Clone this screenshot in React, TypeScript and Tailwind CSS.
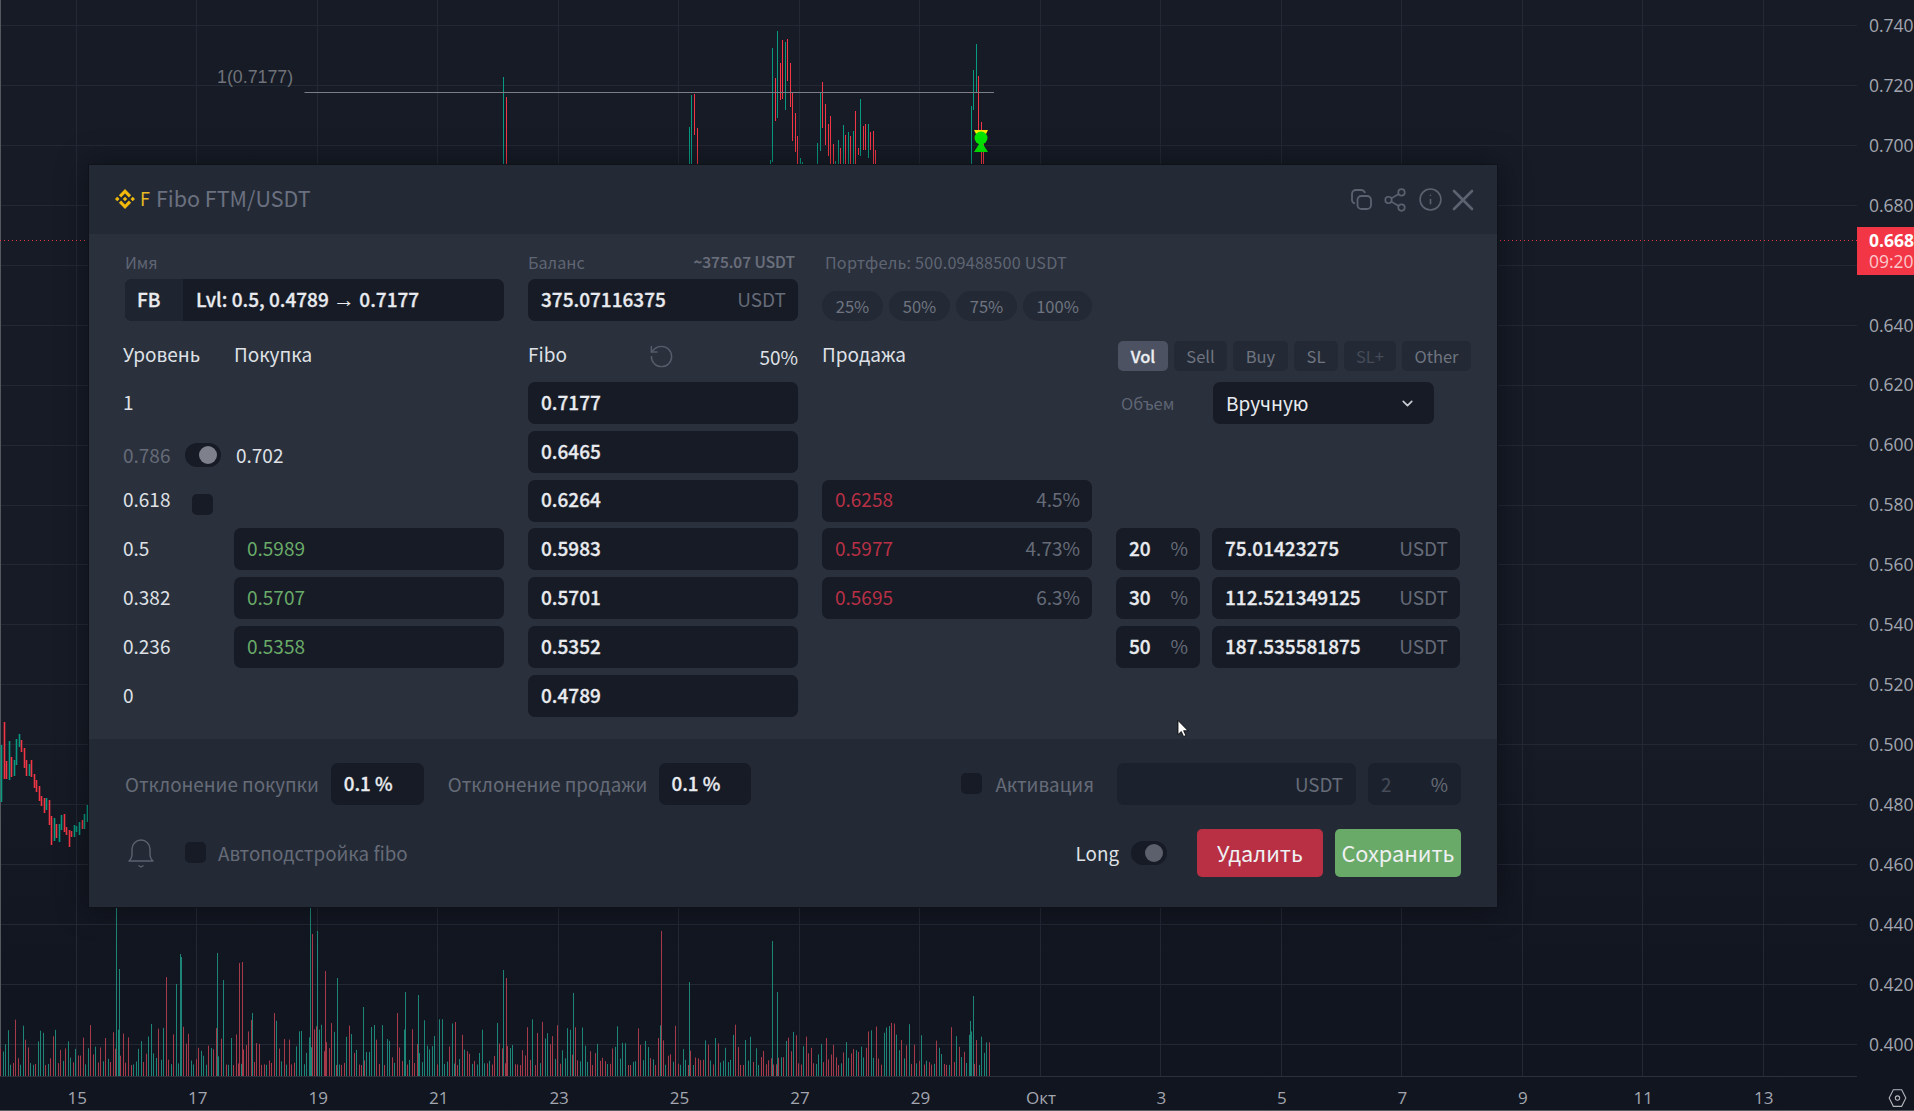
import { ReactNode } from 'react';
import { ChevronDown, Info, RotateCcw, Share2, X } from 'lucide-react';

const RED = '#f23645';
const GREEN = '#089981';

// x, top, bottom, 1 = green
const LEFT_CANDLES: number[][] = [
  [1.5, 745, 802, 1], [4.5, 722, 779, 0], [6.5, 761, 779, 0], [9.5, 741, 780, 1], [11.5, 757, 777, 0],
  [14.5, 760, 776, 1], [16.5, 739, 765, 1], [19.5, 734, 747, 1], [21.5, 740, 752, 0], [24.5, 748, 768, 0],
  [26.5, 760, 776, 0], [29.5, 764, 776, 1], [31.5, 760, 777, 0], [34.5, 774, 788, 0], [36.5, 780, 792, 0],
  [39.5, 786, 801, 0], [41.5, 796, 806, 0], [44.5, 798, 813, 0], [46.5, 798, 810, 1], [49.5, 800, 825, 0],
  [51.5, 816, 845, 0], [54.5, 818, 841, 1], [56.5, 824, 838, 0], [59.5, 824, 842, 1], [61.5, 815, 830, 1],
  [64.5, 814, 832, 0], [66.5, 827, 835, 0], [69.5, 830, 847, 0], [71.5, 831, 837, 0], [74.5, 825, 837, 1],
  [76.5, 826, 832, 1], [79.5, 822, 835, 1], [82.5, 820, 829, 0], [84.5, 814, 829, 1], [87.5, 805, 822, 1],
];

const TOP_WICKS: number[][] = [
  [503, 77, 165, 1], [506, 97, 165, 0], [689, 127, 165, 1], [691, 95, 165, 1], [694, 94, 135, 0], [697, 128, 165, 0],
  [770, 160, 165, 1], [772, 48, 162, 1], [775, 78, 121, 0], [777, 31, 118, 1], [780, 63, 100, 0], [782, 40, 99, 0],
  [785, 42, 110, 1], [787, 39, 81, 0], [790, 63, 107, 0], [792, 93, 141, 0], [795, 113, 152, 0], [797, 136, 165, 0],
  [800, 158, 165, 1], [802, 162, 165, 1], [817, 143, 165, 1], [820, 93, 151, 1], [822, 82, 128, 0], [825, 104, 145, 0],
  [828, 124, 156, 0], [830, 116, 165, 0], [833, 144, 165, 0], [835, 161, 165, 1], [838, 140, 165, 1], [840, 148, 165, 0],
  [843, 125, 165, 1], [845, 135, 165, 0], [848, 132, 165, 1], [850, 136, 165, 0], [853, 131, 165, 1], [855, 111, 165, 0],
  [858, 148, 155, 0], [860, 99, 156, 1], [863, 126, 150, 0], [865, 124, 150, 0], [868, 124, 158, 1], [870, 132, 150, 0],
  [873, 131, 165, 0], [875, 150, 165, 0], [971, 106, 165, 1], [973, 70, 110, 1], [976, 44, 93, 1], [978, 76, 130, 0],
  [981, 122, 165, 0], [983, 140, 165, 0],
];

// tall volume bars, the rest is filler
const VOLUME_SPIKES: number[][] = [
  [116, 908, 1], [119, 969, 1], [166, 977, 0], [176, 984, 1], [180, 954, 1], [181, 957, 1], [217, 953, 1], [223, 980, 1],
  [239, 963, 0], [242, 962, 0], [252, 1013, 1], [274, 1013, 0], [310, 908, 1], [312, 934, 0], [317, 931, 1], [325, 971, 0],
  [337, 978, 1], [363, 1007, 1], [397, 1013, 0], [405, 992, 1], [418, 995, 1], [455, 1022, 0], [503, 970, 1], [506, 978, 0],
  [573, 993, 1], [661, 931, 0], [689, 982, 1], [772, 941, 1], [777, 992, 1], [970, 1021, 1], [973, 996, 1],
];

function volumeBars() {
  const bars: number[][] = [];
  let seed = 7;
  for (let i = 0; i < 395; i++) {
    seed = (seed * 1103515245 + 12345) % 2147483648;
    const a = seed / 2147483648;
    seed = (seed * 1103515245 + 12345) % 2147483648;
    const b = seed / 2147483648;
    bars.push([Math.round(i * 2.51), 1077 - (12 + a * a * 46), b > 0.5 ? 1 : 0]);
  }
  return [...bars, ...VOLUME_SPIKES];
}

const GRID_X = Array.from({ length: 15 }, (_, i) => Math.round(76 + i * 120.47) + 0.5);
const GRID_Y = Array.from({ length: 18 }, (_, i) => Math.round(25 + i * 59.94) + 0.5);

function ChartLines() {
  return (
    <svg width="1857" height="1077" className="block">
      {GRID_X.map((x) => (
        <line key={x} x1={x} x2={x} y1="0" y2="1077" stroke="#232835" />
      ))}
      {GRID_Y.map((y) => (
        <line key={y} x1="0" x2="1857" y1={y} y2={y} stroke="#232835" />
      ))}
      <line x1="0.5" x2="0.5" y1="0" y2="1111" stroke="#55585f" />
      <line x1="0" x2="1857" y1="240.5" y2="240.5" stroke={RED} strokeDasharray="1 3" />
      {volumeBars().map(([x, top, up], i) => (
        <line key={i} x1={x + 0.5} x2={x + 0.5} y1={top} y2="1077" stroke={up ? '#1d8577' : '#a53a4b'} />
      ))}
      {TOP_WICKS.map(([x, a, b, up], i) => (
        <line key={i} x1={x + 0.5} x2={x + 0.5} y1={a} y2={b} stroke={up ? GREEN : RED} />
      ))}
      {LEFT_CANDLES.map(([x, a, b, up], i) => (
        <line key={i} x1={x} x2={x} y1={a} y2={b} stroke={up ? GREEN : RED} strokeWidth="1.6" />
      ))}
      <line x1="304.5" x2="994" y1="92.5" y2="92.5" stroke="#7b7e86" />
      <text x="217" y="83" fill="#6f7279" fontSize="17.800" fontFamily="Liberation Sans, sans-serif">
        1(0.7177)
      </text>
      <path d="M974 130h14l-3 6h-8z" fill="#ffe500" />
      <circle cx="981" cy="138" r="6.5" fill="#00e600" />
      <path d="M981 141l7 11h-14z" fill="#00e600" />
      <line x1="0" x2="1914" y1="1076.5" y2="1076.5" stroke="#2b303b" />
    </svg>
  );
}

const PRICES = [
  '0.740', '0.720', '0.700', '0.680', '', '0.640', '0.620', '0.600', '0.580',
  '0.560', '0.540', '0.520', '0.500', '0.480', '0.460', '0.440', '0.420', '0.400',
];

const DATES = ['15', '17', '19', '21', '23', '25', '27', '29', 'Окт', '3', '5', '7', '9', '11', '13'];

function Field({ children, className = '' }: { children?: ReactNode; className?: string }) {
  return (
    <div className={`flex h-[42px] items-center justify-between rounded-[7px] bg-[#161b26] pb-[2px] pl-[13px] pr-[12px] ${className}`}>
      {children}
    </div>
  );
}

function Value({ children }: { children: ReactNode }) {
  return <span className="font-medium text-[#e9ebef] [-webkit-text-stroke:0.3px]">{children}</span>;
}

function Unit({ children }: { children: ReactNode }) {
  return <span className="text-[#666b78]">{children}</span>;
}

function Box() {
  return <div className="h-[21px] w-[21px] rounded-[5px] bg-[#161b26]" />;
}

function Toggle({ knob = '#7e808c' }: { knob?: string }) {
  return (
    <div className="flex h-[24px] w-[36px] items-center justify-end rounded-full bg-[#161b26] pr-[4px]">
      <div className="h-[18px] w-[18px] rounded-full" style={{ backgroundColor: knob }} />
    </div>
  );
}

function Pill({ label, w }: { label: string; w: string }) {
  return (
    <div className={`flex h-[30px] items-center justify-center rounded-full bg-[#232a35] text-[16.5px] text-[#6f7480] ${w}`}>
      {label}
    </div>
  );
}

function Tab({ label, w, active, dim }: { label: string; w: string; active?: boolean; dim?: boolean }) {
  const tone = active ? 'bg-[#4c5261] font-medium text-[#eceef2] [-webkit-text-stroke:0.3px]' : dim ? 'bg-[#232a35] text-[#454b58]' : 'bg-[#232a35] text-[#6f7480]';
  return <div className={`flex h-[30px] items-center justify-center rounded-[5px] text-[16.5px] ${w} ${tone}`}>{label}</div>;
}

function Row({ level, buy, fibo, sell, right }: { level?: ReactNode; buy?: ReactNode; fibo?: string; sell?: ReactNode; right?: ReactNode }) {
  return (
    <div className="flex h-[42px] gap-[24px]">
      <div className="flex w-[381px] items-center">
        <div className="flex w-[111px] -translate-y-px items-center">{level}</div>
        <div className="w-[270px]">{buy}</div>
      </div>
      <Field className="w-[270px]">
        <Value>{fibo}</Value>
      </Field>
      <div className="w-[270px]">{sell}</div>
      <div className="flex flex-1 items-center gap-[12px]">{right}</div>
    </div>
  );
}

function Sell({ price, pct }: { price: string; pct: string }) {
  return (
    <Field>
      <span className="text-[#b93045]">{price}</span>
      <Unit>{pct}</Unit>
    </Field>
  );
}

function Amount({ pct, usdt }: { pct: string; usdt: string }) {
  return (
    <>
      <Field className="w-[84px]">
        <Value>{pct}</Value>
        <Unit>%</Unit>
      </Field>
      <Field className="w-[248px]">
        <Value>{usdt}</Value>
        <Unit>USDT</Unit>
      </Field>
    </>
  );
}

function BinanceLogo() {
  return (
    <svg viewBox="0 0 32 32" className="h-[20px] w-[20px]" fill="#f0b90b">
      <path d="M9.79 13.44 16 7.23l6.21 6.22 3.61-3.61L16 0 6.18 9.83l3.61 3.61zM0 16l3.61-3.61L7.23 16l-3.62 3.61L0 16zm9.79 2.56L16 24.77l6.21-6.22 3.61 3.61L16 32l-9.82-9.83 3.61-3.61zM24.77 16l3.62-3.61L32 16l-3.61 3.61L24.77 16zM19.66 16 16 12.34 13.3 15.05l-.31.31-.64.64L16 19.66 19.66 16z" />
    </svg>
  );
}

function CopyIcon() {
  return (
    <svg viewBox="0 0 21 21" className="h-[21px] w-[21px]" fill="none" stroke="#5c6270" strokeWidth="1.8">
      <path d="M4 14.5C2 14 1 12.6 1 11V5a4 4 0 0 1 4-4h5c2 0 3.4 1.2 4 3" />
      <rect x="6.5" y="7" width="13.5" height="13" rx="4" />
    </svg>
  );
}

function BellIcon() {
  return (
    <svg viewBox="0 0 26 30" className="h-[30px] w-[26px]" fill="none" stroke="#5c6270" strokeWidth="1.4" strokeLinejoin="round">
      <path d="M1 23h24c-2.500-2-3-4-3-7v-5a9 9 0 0 0-18 0v5c0 3-.5 5-3 7z" />
      <path d="M10.500 27.500l2.500 1.500 2.500-1.500" />
    </svg>
  );
}

function Cursor() {
  return (
    <svg viewBox="0 0 11 17" className="absolute left-[1177px] top-[720px] h-[17px] w-[12px]">
      <path d="M.5.5v14l3.300-3 2.300 5 2.300-1-2.300-4.800H10.500z" fill="#fff" stroke="#000" strokeWidth=".8" />
    </svg>
  );
}

function SettingsHex() {
  return (
    <svg viewBox="0 0 22 24" className="h-[20px] w-[21px]" fill="none" stroke="#b5b7bd" strokeWidth="1.3">
      <path d="M6 2h10l5 10-5 10H6L1 12z" />
      <circle cx="11" cy="12" r="2.600" />
    </svg>
  );
}

function Modal() {
  return (
    <div className="absolute left-[88px] top-[164px] w-[1410px] border border-[#0f1218] bg-[#2a303c] text-[19px] shadow-[0_0_30px_rgba(0,0,0,0.4)]">
      <div className="flex h-[69px] items-center justify-between bg-[#232a35] pl-[26px] pr-[18px]">
        <div className="flex -translate-y-px items-center">
          <BinanceLogo />
          <span className="ml-[5px] text-[18px] text-[#e8b923]">F</span>
          <span className="ml-[6px] text-[21.500px] text-[#6b7080]">Fibo FTM/USDT</span>
        </div>
        <div className="flex items-center text-[#5c6270]">
          <CopyIcon />
          <div className="ml-[6px] flex w-[33px] justify-center">
            <Share2 size={26} strokeWidth={1.5} />
          </div>
          <div className="ml-[3px] flex w-[33px] justify-center">
            <Info size={25} strokeWidth={1.5} />
          </div>
          <div className="flex w-[32px] justify-center">
            <X size={36} strokeWidth={1.8} className="-mx-[2px]" />
          </div>
        </div>
      </div>

      <div className="pb-[22px] pl-[34px] pt-[17px] text-[#dfe1e6]">
        <div className="flex h-[24px] -translate-y-px gap-[24px] text-[16.200px] text-[#5f6573]">
          <div className="w-[381px] pl-[2px]">Имя</div>
          <div className="flex w-[270px] items-center justify-between pr-[3px]">
            <span>Баланс</span>
            <span className="text-[15.500px] font-medium text-[#6a6f7c] [-webkit-text-stroke:0.2px]">~375.07 USDT</span>
          </div>
          <div className="pl-[3px] tracking-[0.2px]">Портфель: 500.09488500 USDT</div>
        </div>

        <div className="mt-[4px] flex h-[42px] items-end gap-[24px]">
          <div className="w-[381px] pl-[2px]">
            <div className="flex h-[42px] items-center overflow-hidden rounded-[7px] bg-[#161b26]">
              <div className="flex h-full w-[58px] items-center bg-[#1f2530] pb-[2px] pl-[12px] font-medium text-[#e9ebef] [-webkit-text-stroke:0.3px]">FB</div>
              <span className="pb-[2px] pl-[13px] font-medium text-[#e9ebef] [-webkit-text-stroke:0.3px]">
                Lvl: 0.5, 0.4789 <span className="font-['Liberation_Sans',sans-serif] text-[22px] font-normal leading-none [-webkit-text-stroke:0px]">→</span> 0.7177
              </span>
            </div>
          </div>
          <Field className="w-[270px]">
            <Value>375.07116375</Value>
            <Unit>USDT</Unit>
          </Field>
          <div className="flex w-[270px] gap-[6px]">
            <Pill label="25%" w="w-[61px]" />
            <Pill label="50%" w="w-[61px]" />
            <Pill label="75%" w="w-[61px]" />
            <Pill label="100%" w="w-[69px]" />
          </div>
        </div>

        <div className="mt-[20px] flex h-[30px] gap-[24px]">
          <div className="flex w-[381px] -translate-y-px">
            <div className="w-[111px]">Уровень</div>
            <div>Покупка</div>
          </div>
          <div className="flex w-[270px]">
            <span className="w-[120px] -translate-y-px">Fibo</span>
            <RotateCcw size={27} strokeWidth={1.3} className="mt-[2px] text-[#565c6a]" />
            <span className="mt-[2px] flex-1 text-right">50%</span>
          </div>
          <div className="w-[270px] -translate-y-px">Продажа</div>
          <div className="flex gap-[6px] pl-[2px]">
            <Tab label="Vol" w="w-[50px]" active />
            <Tab label="Sell" w="w-[53px]" />
            <Tab label="Buy" w="w-[55px]" />
            <Tab label="SL" w="w-[44px]" />
            <Tab label="SL+" w="w-[52px]" dim />
            <Tab label="Other" w="w-[69px]" />
          </div>
        </div>

        <div className="mt-[11px] flex flex-col gap-[6.830px]">
          <Row
            level="1"
            fibo="0.7177"
            right={
              <>
                <span className="w-[85px] pl-[5px] text-[16.500px] text-[#5f6573]">Объем</span>
                <div className="flex h-[42px] w-[221px] items-center justify-between rounded-[7px] bg-[#161b26] pl-[13px] pr-[18px] text-[#e9ebef]">
                  Вручную
                  <ChevronDown size={17} strokeWidth={2.4} className="text-[#c9ccd2]" />
                </div>
              </>
            }
          />
          <Row
            level={
              <>
                <span className="mt-[9px] w-[62px] text-[#666b78]">0.786</span>
                <div className="mt-[8px]">
                  <Toggle />
                </div>
              </>
            }
            buy={<span className="mt-[7px] block pl-[2px]">0.702</span>}
            fibo="0.6465"
          />
          <Row
            level={
              <>
                <span className="w-[69px]">0.618</span>
                <div className="mt-[9px]">
                  <Box />
                </div>
              </>
            }
            fibo="0.6264"
            sell={<Sell price="0.6258" pct="4.5%" />}
          />
          <Row
            level="0.5"
            buy={<Field className="text-[#6aaa68]">0.5989</Field>}
            fibo="0.5983"
            sell={<Sell price="0.5977" pct="4.73%" />}
            right={<Amount pct="20" usdt="75.01423275" />}
          />
          <Row
            level="0.382"
            buy={<Field className="text-[#6aaa68]">0.5707</Field>}
            fibo="0.5701"
            sell={<Sell price="0.5695" pct="6.3%" />}
            right={<Amount pct="30" usdt="112.521349125" />}
          />
          <Row
            level="0.236"
            buy={<Field className="text-[#6aaa68]">0.5358</Field>}
            fibo="0.5352"
            right={<Amount pct="50" usdt="187.535581875" />}
          />
          <Row level="0" fibo="0.4789" />
        </div>
      </div>

      <div className="flex flex-col gap-[24px] bg-[#232a35] pb-[30px] pl-[36px] pr-[36px] pt-[24px] text-[18.800px] text-[#666b78]">
        <div className="flex h-[42px] items-center">
          <span className="w-[206px]">Отклонение покупки</span>
          <Field className="w-[93px]">
            <Value>0.1 %</Value>
          </Field>
          <span className="ml-[24px] w-[211px]">Отклонение продажи</span>
          <Field className="w-[93px]">
            <Value>0.1 %</Value>
          </Field>
          <div className="ml-[210px]">
            <Box />
          </div>
          <span className="ml-[13px] w-[122px]">Активация</span>
          <div className="flex h-[42px] w-[239px] items-center justify-end rounded-[7px] bg-[#1c222d] pr-[13px]">USDT</div>
          <div className="ml-[12px] flex h-[42px] w-[93px] items-center justify-between rounded-[7px] bg-[#1c222d] px-[13px]">
            <span className="text-[#454b58]">2</span>
            <span>%</span>
          </div>
        </div>
        <div className="flex h-[48px] items-center">
          <div className="w-[60px] pl-[3px]">
            <BellIcon />
          </div>
          <Box />
          <span className="ml-[12px] flex-1">Автоподстройка fibo</span>
          <span className="text-[#dfe1e6]">Long</span>
          <div className="ml-[12px]">
            <Toggle knob="#5c606c" />
          </div>
          <button className="ml-[30px] h-[48px] w-[126px] rounded-[5px] bg-[#b93045] text-[21.700px] text-[#eef0f2]">Удалить</button>
          <button className="ml-[12px] h-[48px] w-[126px] rounded-[5px] bg-[#6aaa68] text-[21.700px] text-[#eef0f2]">Сохранить</button>
        </div>
      </div>
    </div>
  );
}

export default function App() {
  return (
    <div className="relative h-[1111px] w-[1914px] overflow-hidden bg-linear-to-b from-[#161b26] from-65% to-[#11151f] to-90% font-['Noto_Sans_CJK_SC','Noto_Sans',sans-serif]">
      <div className="flex h-[1077px]">
        <ChartLines />
        <div className="-mt-[5px] flex-1 pl-[12px] font-['Open_Sans',sans-serif] text-[17.500px] text-[#a3a6af]">
          {PRICES.map((p, i) => (
            <div key={i} className="flex h-[59.940px] items-center">
              {p}
            </div>
          ))}
        </div>
      </div>

      <div className="flex h-[34px] border-b border-[#55585f] pl-[17px] pt-[8px] font-['Open_Sans',sans-serif] text-[17px] text-[#a3a6af]">
        {DATES.map((d) => (
          <div key={d} className="flex w-[120.470px] items-center justify-center">
            {d}
          </div>
        ))}
        <div className="ml-[63px] flex items-center">
          <SettingsHex />
        </div>
      </div>

      <div className="absolute left-[1857px] top-[227px] flex h-[48px] w-[57px] flex-col justify-center bg-[#f23645] pl-[12px] font-['Open_Sans',sans-serif] text-[17.500px] leading-[21px]">
        <span className="font-bold text-white">0.668</span>
        <span className="text-[#fcc8cd]">09:20</span>
      </div>

      <Modal />
      <Cursor />
    </div>
  );
}
